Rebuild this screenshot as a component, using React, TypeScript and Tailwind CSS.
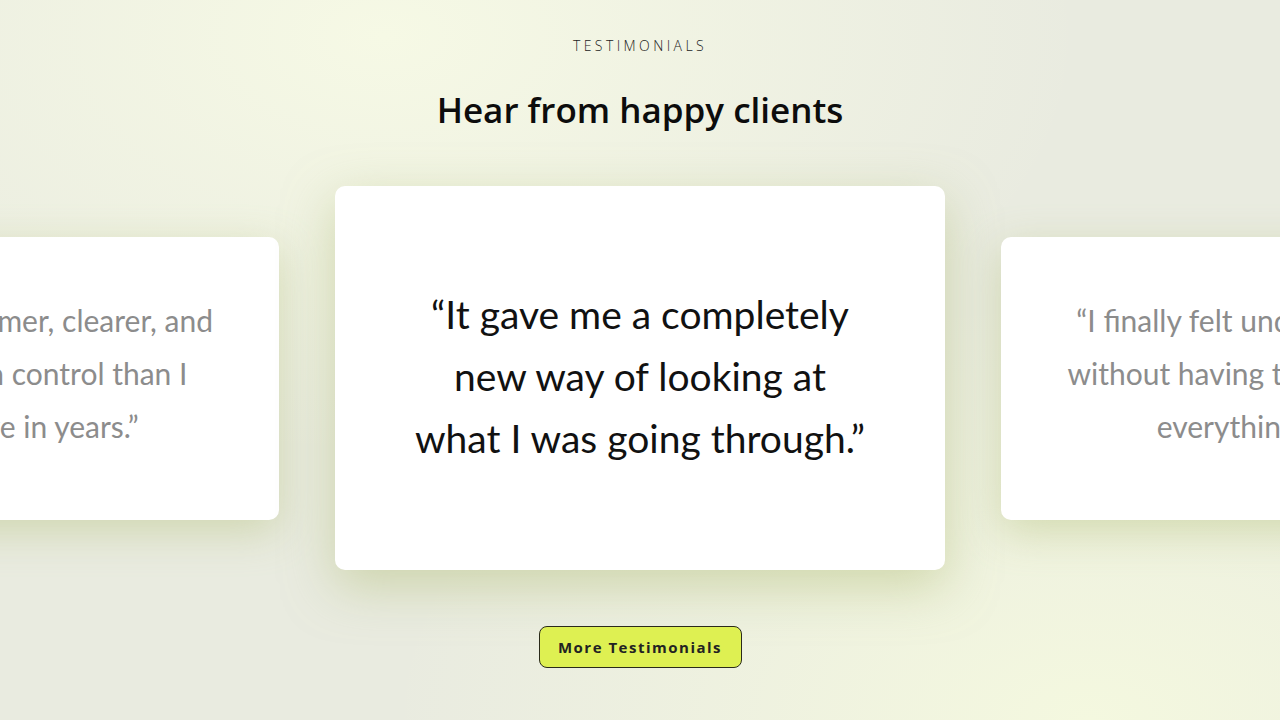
import React from 'react'

const quotes = [
  {
    lines: ['“I’m calmer, clearer, and', 'more in control than I', 'have in years.”'],
    side: true,
    firstLine: 'block whitespace-nowrap pl-[24px]',
  },
  {
    lines: ['“It gave me a completely', 'new way of looking at', 'what I was going through.”'],
    side: false,
    firstLine: 'block whitespace-nowrap',
  },
  {
    lines: ['“I finally felt understood', 'without having to explain', 'everything.”'],
    side: true,
    firstLine: 'block whitespace-nowrap',
  },
]

function QuoteCard({ lines, side, firstLine }: { lines: string[]; side: boolean; firstLine: string }) {
  return (
    <div
      className={
        side
          ? 'shrink-0 w-[466px] h-[283px] pb-[9px] rounded-[10px] bg-white flex items-center justify-center shadow-[0_12px_40px_rgba(178,190,120,0.45)]'
          : 'shrink-0 w-[610px] h-[384px] pb-[4px] rounded-[10px] bg-white flex items-center justify-center shadow-[0_16px_50px_rgba(178,190,120,0.5)]'
      }
    >
      <p
        className={
          side
            ? "text-center font-['Lato',sans-serif] text-[30px] leading-[53px] text-[#8c8c8c]"
            : "text-center font-['Lato',sans-serif] text-[39px] leading-[62px] text-[#111]"
        }
      >
        {lines.map((l, i) => (
          <span key={i} className={i === 0 ? firstLine : 'block whitespace-nowrap'}>
            {l}
          </span>
        ))}
      </p>
    </div>
  )
}

export default function App() {
  return (
    <div className="relative w-full h-[720px] overflow-hidden flex flex-col items-center bg-[#e9ebe0] bg-[radial-gradient(ellipse_700px_420px_at_30%_5%,#f6f9e5_0%,rgba(246,249,229,0)_100%),radial-gradient(ellipse_700px_420px_at_85%_100%,#f4f8df_0%,rgba(244,248,223,0)_100%)]">
      {/* Header */}
      <p className="mt-[38px] font-['Open_Sans',sans-serif] font-light text-[14px] leading-[16px] tracking-[3.4px] text-[#222]">
        TESTIMONIALS
      </p>
      <h2 className="mt-[36px] font-['Open_Sans',sans-serif] text-[35px] leading-[40px] font-semibold text-[#0c0c0c]">
        Hear from happy clients
      </h2>

      {/* Carousel */}
      <div className="mt-[56px] w-full flex items-center justify-center gap-[56px]">
        {quotes.map((q, i) => (
          <QuoteCard key={i} lines={q.lines} side={q.side} firstLine={q.firstLine} />
        ))}
      </div>

      <button className="mt-[56px] w-[203px] h-[42px] rounded-[8px] border border-[#2a2a1a] bg-[#def052] font-['Open_Sans',sans-serif] text-[15px] font-bold tracking-[1.5px] text-[#222]">
        More Testimonials
      </button>
    </div>
  )
}
